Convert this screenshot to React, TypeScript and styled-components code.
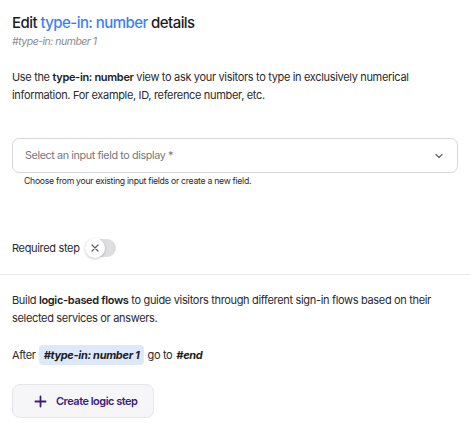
import React, { useState } from 'react'
import styled, { createGlobalStyle } from 'styled-components'

const GlobalStyle = createGlobalStyle`
	html, body {
		margin: 0;
		padding: 0;
		background: #ffffff;
	}

	body {
		font-family: Inter, 'Noto Sans', sans-serif;
		letter-spacing: -0.33px;
		color: #1f1f23;
		-webkit-font-smoothing: antialiased;
	}

	button {
		letter-spacing: inherit;
	}
`

const Panel = styled.div`
	width: 470px;
	padding-top: 12px;
`

const Section = styled.section`
	padding: 0 12px;
`

const Heading = styled.h2`
	margin: 0;
	font-size: 15px;
	line-height: 22px;
	font-weight: 500;
	letter-spacing: -0.56px;
	color: #1d1d21;

	span {
		color: #3d7ff0;
	}
`

const Tag = styled.div`
	font-size: 10.5px;
	line-height: 16px;
	font-style: italic;
	letter-spacing: -0.5px;
	color: #8a8a8f;
`

const Text = styled.p<{ $top?: number }>`
	margin: ${({ $top }) => $top ?? 0}px 0 0;
	font-size: 11px;
	line-height: 18px;
	color: #2a2a2e;

	b {
		font-weight: 600;
		color: #1d1d21;
	}
`

const Select = styled.button`
	display: flex;
	align-items: center;
	justify-content: space-between;
	width: 100%;
	height: 35px;
	margin-top: 34px;
	padding: 0 12px;
	border: 1px solid #d7d7db;
	border-radius: 7px;
	background: #fff;
	font-family: inherit;
	font-size: 10.8px;
	letter-spacing: -0.4px;
	color: #77777d;
	cursor: pointer;
`

const Hint = styled.div`
	margin-top: 2px;
	padding-left: 12px;
	font-size: 8.7px;
	line-height: 12px;
	letter-spacing: -0.29px;
	color: #2a2a2e;
`

const ToggleRow = styled.label`
	display: flex;
	align-items: center;
	gap: 5px;
	height: 20px;
	margin-top: 51px;
	margin-bottom: 16px;
	font-size: 11px;
	color: #2a2a2e;
`

const Track = styled.span<{ $on: boolean }>`
	position: relative;
	display: inline-block;
	width: 31px;
	height: 18px;
	border-radius: 9px;
	background: ${({ $on }) => ($on ? '#3d7ff0' : '#dedee0')};
	cursor: pointer;
`

const Knob = styled.span<{ $on: boolean }>`
	position: absolute;
	top: -1px;
	left: ${({ $on }) => ($on ? '11px' : '0')};
	display: flex;
	align-items: center;
	justify-content: center;
	width: 20px;
	height: 20px;
	border-radius: 50%;
	background: #fff;
	box-shadow: 0 1px 3px rgba(0, 0, 0, 0.22);
`

const Divider = styled.hr`
	margin: 0;
	border: 0;
	border-top: 1px solid #ececee;
`

const FlowRow = styled.div`
	display: flex;
	align-items: center;
	gap: 3px;
	height: 20px;
	margin-top: 18px;
	font-size: 11px;
	color: #2a2a2e;
`

const Step = styled.span<{ $chip?: boolean }>`
	padding: ${({ $chip }) => ($chip ? '3px 5px' : '3px 1px')};
	border-radius: 4px;
	background: ${({ $chip }) => ($chip ? '#dee8fb' : 'transparent')};
	font-weight: 700;
	font-style: italic;
	color: #1d1d21;
`

const AddButton = styled.button`
	display: flex;
	align-items: center;
	gap: 9px;
	height: 34px;
	margin-top: 19px;
	padding: 0 16px 0 21px;
	border: 1px solid #e6e6ea;
	border-radius: 8px;
	background: #f6f6f8;
	font-family: inherit;
	font-size: 11px;
	font-weight: 600;
	letter-spacing: -0.5px;
	color: #3a1c7d;
	cursor: pointer;
`

const Chevron = () => (
	<svg width='12' height='12' viewBox='0 0 12 12' fill='none'>
		<path d='M3 4.5l3 3 3-3' stroke='#6b6b70' strokeWidth='1.4' strokeLinecap='round' strokeLinejoin='round' />
	</svg>
)

const Cross = () => (
	<svg width='10' height='10' viewBox='0 0 10 10' fill='none'>
		<path d='M2 2l6 6M8 2l-6 6' stroke='#5d5d62' strokeWidth='1.2' strokeLinecap='round' />
	</svg>
)

const Plus = () => (
	<svg width='13' height='13' viewBox='0 0 14 14' fill='none'>
		<path d='M7 1.5v11M1.5 7h11' stroke='#3a1c7d' strokeWidth='1.9' strokeLinecap='round' />
	</svg>
)

const App = () => {
	const [required, setRequired] = useState(false)

	return (
		<Panel>
			<GlobalStyle />
			<Section>
				<Heading>
					Edit <span>type-in: number</span> details
				</Heading>
				<Tag>#type-in: number 1</Tag>
				<Text $top={18}>
					Use the <b>type-in: number</b> view to ask your visitors to type in exclusively numerical
					information. For example, ID, reference number, etc.
				</Text>
				<Select>
					Select an input field to display *
					<Chevron />
				</Select>
				<Hint>Choose from your existing input fields or create a new field.</Hint>
				<ToggleRow>
					Required step
					<Track $on={required} onClick={() => setRequired(!required)}>
						<Knob $on={required}>{!required && <Cross />}</Knob>
					</Track>
				</ToggleRow>
			</Section>
			<Divider />
			<Section>
				<Text $top={16}>
					Build <b>logic-based flows</b> to guide visitors through different sign-in flows based on their
					selected services or answers.
				</Text>
				<FlowRow>
					After <Step $chip>#type-in: number 1</Step> go to <Step>#end</Step>
				</FlowRow>
				<AddButton>
					<Plus />
					Create logic step
				</AddButton>
			</Section>
		</Panel>
	)
}

export default App
